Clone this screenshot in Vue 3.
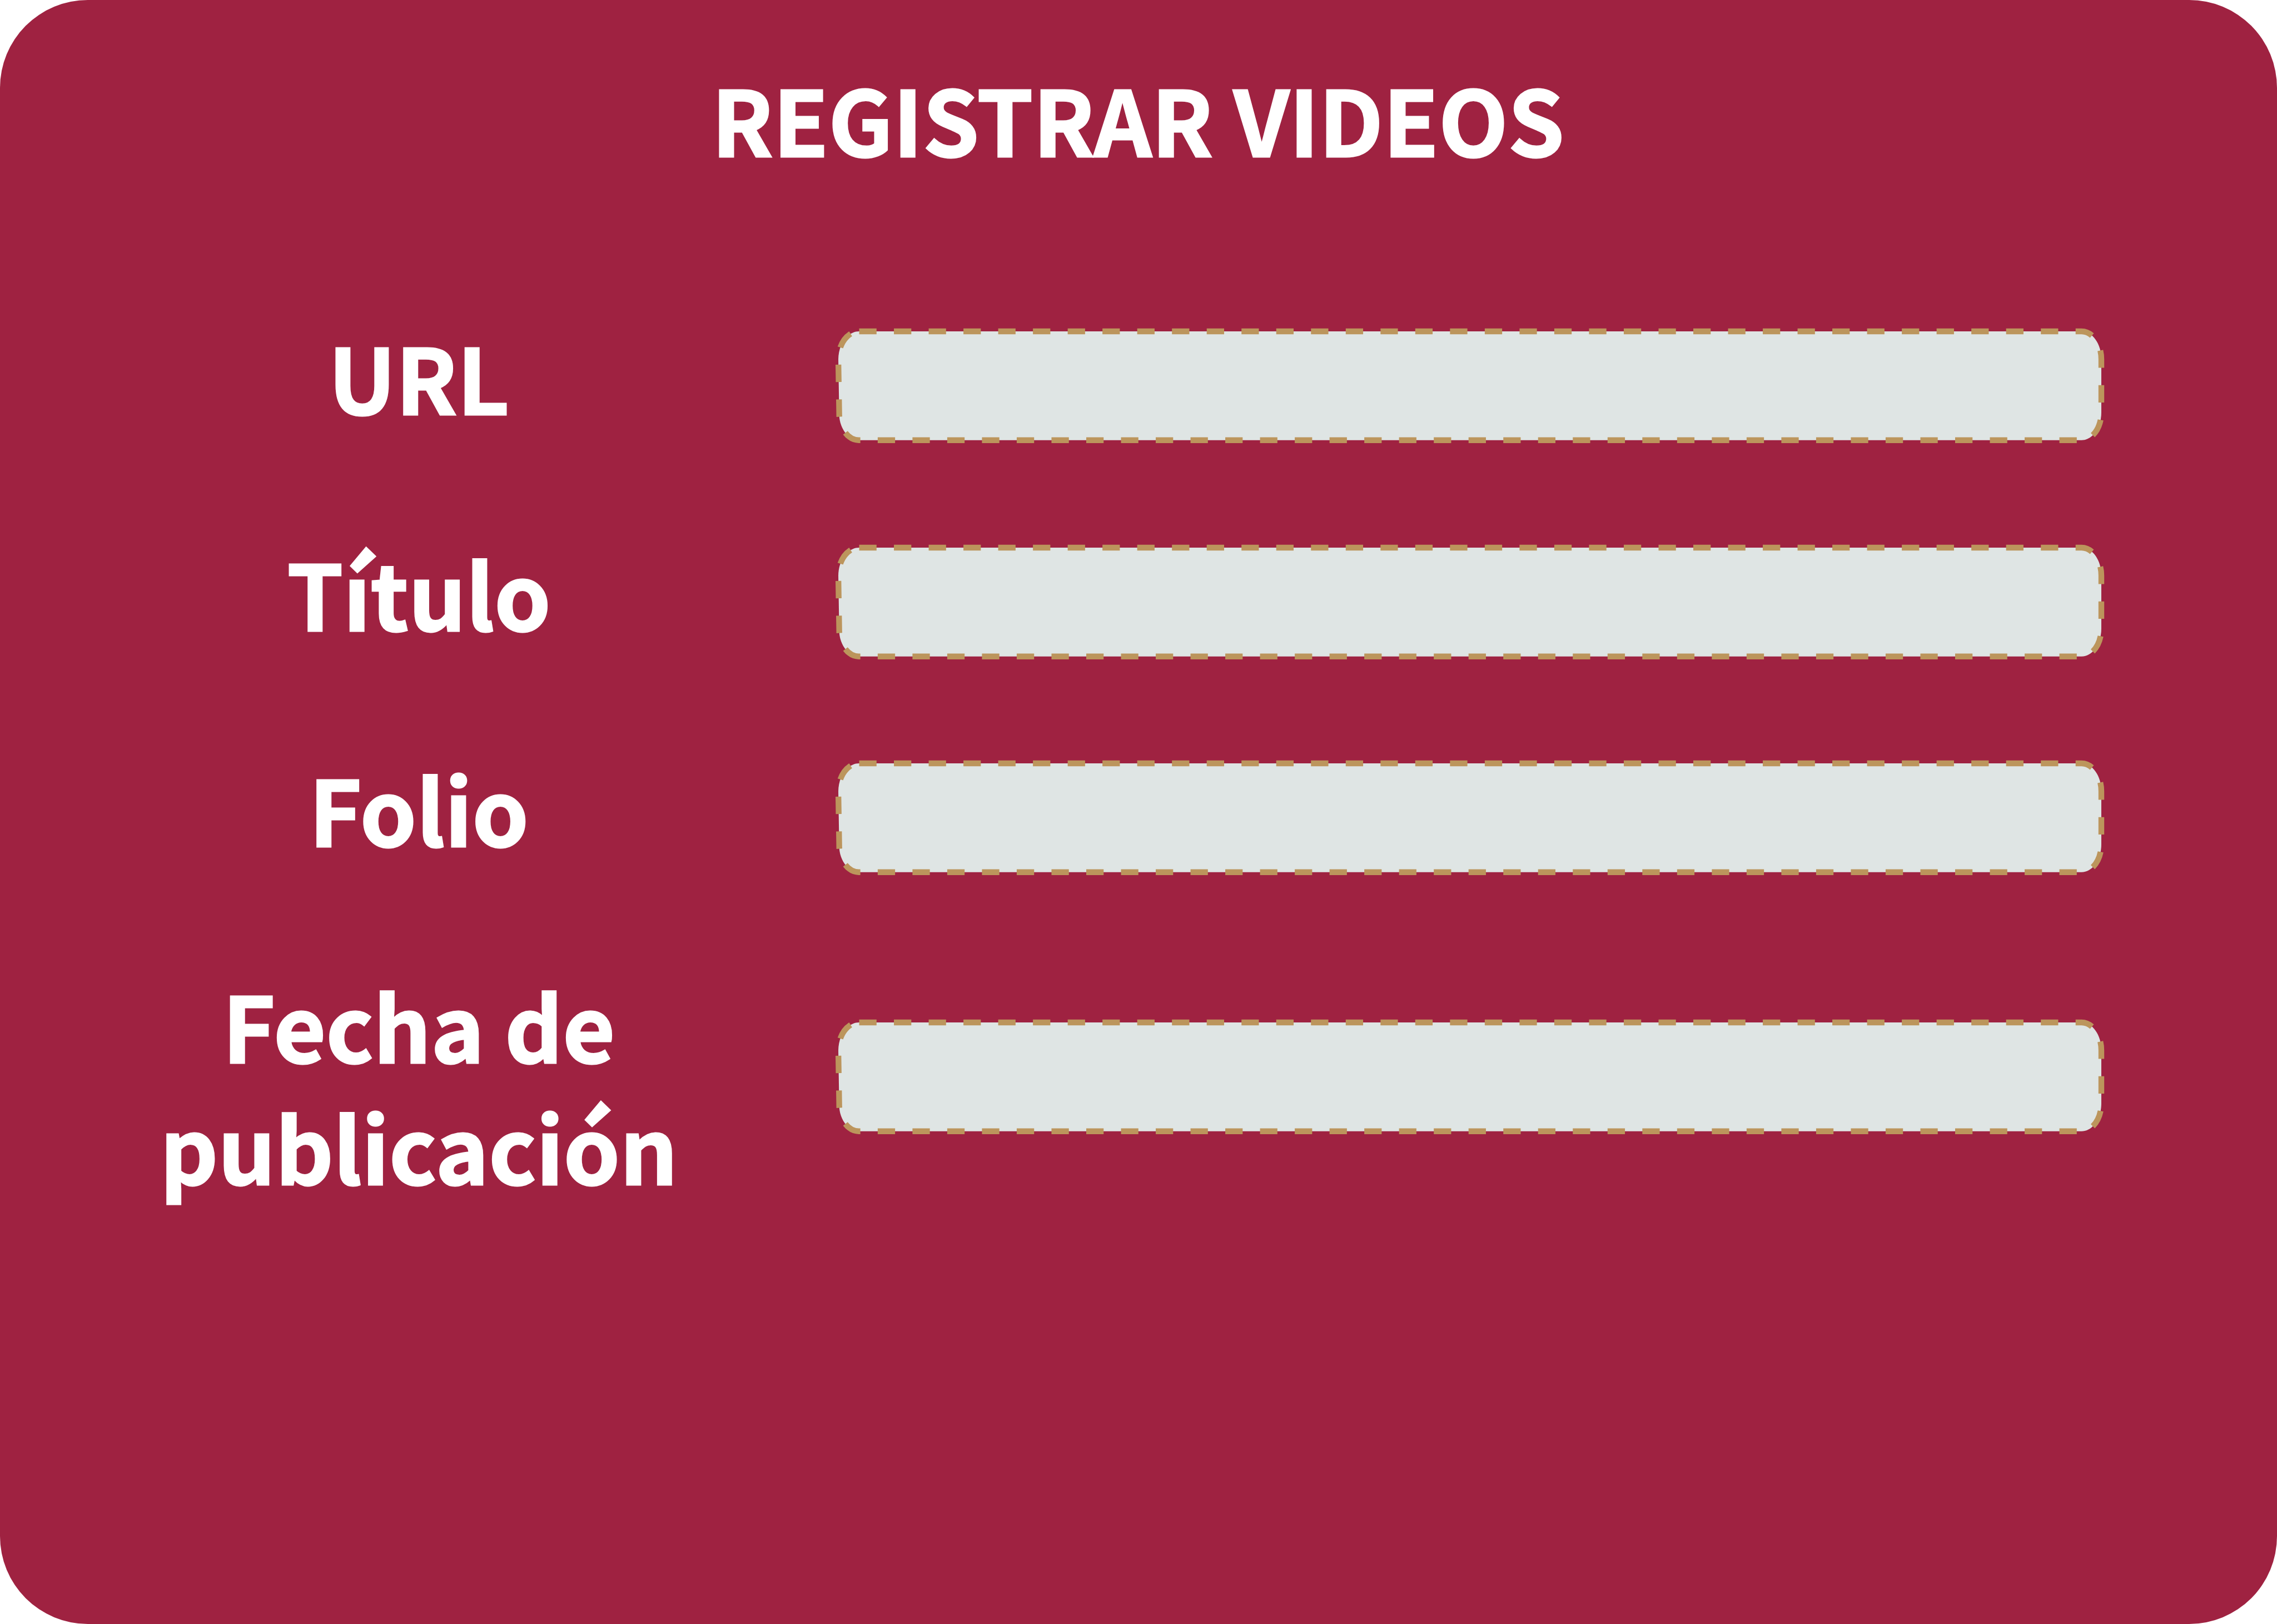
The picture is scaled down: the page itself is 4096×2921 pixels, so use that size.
<script setup>
import { reactive } from 'vue'

const fields = [
  { id: 'url', label: 'URL' },
  { id: 'titulo', label: 'Título' },
  { id: 'folio', label: 'Folio' },
  { id: 'fecha', label: 'Fecha de publicación', tall: true },
]

const video = reactive({ url: '', titulo: '', folio: '', fecha: '' })
</script>

<template>
  <main class="card">
    <h1 class="title">REGISTRAR VIDEOS</h1>
    <form class="form" @submit.prevent>
      <div v-for="field in fields" :key="field.id" class="row" :class="{ tall: field.tall }">
        <label class="label" :for="field.id">{{ field.label }}</label>
        <div class="control">
          <svg class="frame" viewBox="0 0 3634 313" aria-hidden="true">
            <path
              d="M60 0H3577C3608.5 0 3634 36 3634 80V233C3634 277 3608.5 313 3577 313H59C30 313 5 282 2.7 243L0 81C0 36 27 0 60 0Z"
            />
          </svg>
          <input :id="field.id" v-model="video[field.id]" class="input" type="text" />
        </div>
      </div>
    </form>
  </main>
</template>

<style>
body {
  margin: 0;
  background: #ffffff;
}
</style>

<style scoped>
.card {
  box-sizing: border-box;
  min-height: 100vh;
  padding: 102px 316px 102px 232px;
  border-radius: 158px;
  background: #9f2241;
  color: #ffffff;
  font-family: "Noto Sans CJK SC", "Noto Sans", sans-serif;
  font-size: 162px;
  font-weight: 700;
  line-height: 219px;
}

.title,
.label {
  -webkit-text-stroke: 3px currentColor;
  text-align: center;
}

.title {
  margin: 0 0 245px 82px;
  font-size: inherit;
  font-weight: inherit;
}

.form {
  display: flex;
  flex-direction: column;
  gap: 163px;
}

.row {
  display: grid;
  grid-template-columns: minmax(0, 1043fr) minmax(0, 2272fr);
  column-gap: 233px;
  align-items: start;
}

.control {
  display: grid;
  margin-top: 30px;
}

.tall .control {
  margin-top: 107px;
}

.frame,
.input {
  grid-area: 1 / 1;
  width: 100%;
}

.frame {
  display: block;
  overflow: visible;
  fill: #dfe5e4;
  stroke: #bc955c;
  stroke-width: 16.6;
  stroke-dasharray: 50;
}

.input {
  box-sizing: border-box;
  height: 100%;
  min-height: 0;
  padding: 0 48px;
  border: 0;
  outline: 0;
  background: transparent;
  color: #9f2241;
  font-family: inherit;
  font-size: 96px;
  line-height: 120px;
}
</style>
